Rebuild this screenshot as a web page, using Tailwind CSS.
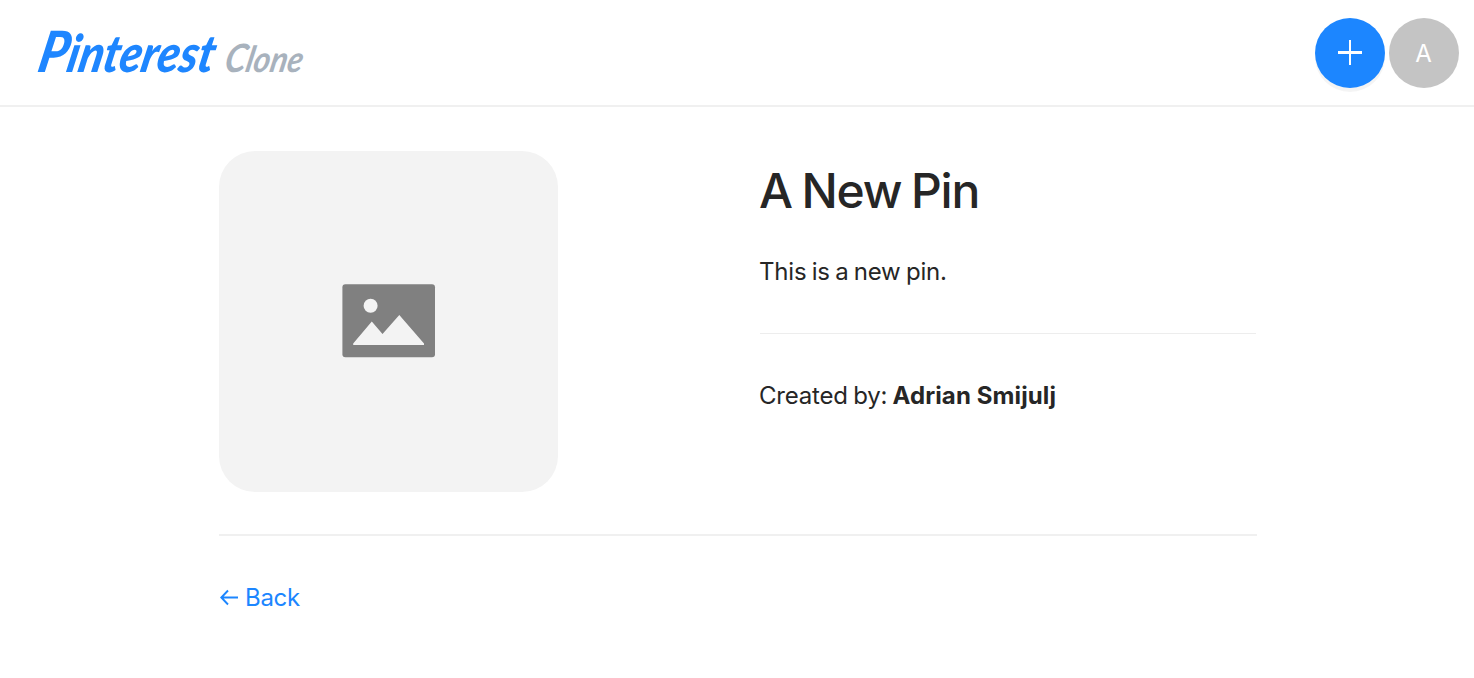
<!DOCTYPE html>
<html lang="en">
<head>
<meta charset="utf-8">
<title>Pinterest Clone</title>
<script src="https://cdn.jsdelivr.net/npm/@tailwindcss/browser@4"></script>
</head>
<body class="bg-white font-['Inter',sans-serif] text-2xl text-[#262626]">
<header class="flex h-[107px] items-start justify-between border-b-2 border-[#f0f0f0] pr-[15px] pl-5">
  <a href="#" aria-label="Pinterest Clone">
    <svg class="block h-[100px] w-[320px] overflow-visible" viewBox="20 0 320 100" font-family="Lato, sans-serif" font-style="italic">
      <text transform="translate(36 72) skewX(-12)" textLength="176" lengthAdjust="spacingAndGlyphs" font-size="57" font-weight="900" fill="#1e86ff">P<tspan font-size="52">interest</tspan></text>
      <text transform="translate(223 72) skewX(-12)" textLength="78" lengthAdjust="spacingAndGlyphs" font-size="39" font-weight="700" fill="#a8b2bd">C<tspan font-size="36">lone</tspan></text>
    </svg>
  </a>
  <div class="mt-[18px] flex gap-1">
    <button aria-label="New pin" class="flex size-[70px] items-center justify-center rounded-full bg-[#1c86ff] shadow-[0_4px_0_rgba(0,0,0,0.045)]">
      <svg class="size-[70px]" viewBox="0 0 70 70" fill="#fff"><path d="M23 33h24v3H23zM34 22h2v25h-2z"/></svg>
    </button>
    <div class="flex size-[70px] items-center justify-center rounded-full bg-[#c4c4c4] pt-0.5 pr-px text-2xl text-white">A</div>
  </div>
</header>
<main class="ml-[219px] w-[1038px] pt-11">
  <section class="flex h-[341px] justify-between">
    <div class="flex h-[341px] w-[339px] items-center justify-center rounded-[36px] bg-[#f3f3f3]">
      <svg class="h-[75px] w-[95px]" viewBox="341 284 95 75">
        <rect x="342.4" y="284.2" width="92.6" height="73" rx="3" fill="#808080"/>
        <circle cx="370.6" cy="305.8" r="7" fill="#f3f3f3"/>
        <path d="M353.2 345v-1.500L371.800 321.500L382.500 334L399.300 315L424 343.500V345z" fill="#f3f3f3"/>
      </svg>
    </div>
    <div class="w-[498px] pt-[10px]">
      <h1 class="text-5xl leading-[60px] font-medium tracking-[-1.2px] [word-spacing:-2px]">A New Pin</h1>
      <p class="mt-[33px] leading-9 tracking-[-0.2px] [word-spacing:-1.2px]">This is a new pin.</p>
      <hr class="mt-[43px] mr-px ml-px border-[#ededed]">
      <p class="mt-11 leading-9"><span class="tracking-[-0.2px] [word-spacing:-1.2px]">Created by: </span><strong class="font-bold tracking-[0.1px]">Adrian Smijulj</strong></p>
    </div>
  </section>
  <hr class="mt-[42px] border-t-2 border-[#f0f0f0]">
  <a href="#" class="mt-11 flex h-9 items-center text-[#1c86ff]">
    <svg class="mr-2 ml-px h-[18px] w-[18px]" viewBox="0 0 18 18" fill="none" stroke="currentColor" stroke-width="1.900"><path d="M18 8.500H1.500M8 1.500L1.300 8.500L8 15.500"/></svg>
    <span class="-ml-px tracking-[-0.3px]">Back</span>
  </a>
</main>
</body>
</html>
